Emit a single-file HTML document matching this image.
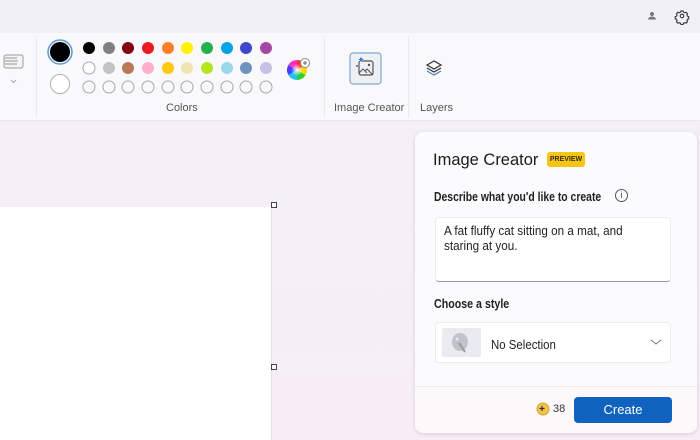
<!DOCTYPE html>
<html><head><meta charset="utf-8"><style>
*{margin:0;padding:0;box-sizing:border-box}
body{width:700px;height:440px;overflow:hidden;position:relative;font-family:"Liberation Sans",sans-serif;background:linear-gradient(180deg,#f2f1f6 0%,#f3f0f6 50%,#f7eef4 100%)}
.a{position:absolute}
.t{color:#1b1b1b;white-space:nowrap}
.sx{transform-origin:0 0}
</style></head><body>
<div class="a" style="left:0;top:0;width:700px;height:33px;background:#f1f1f5"></div>
<div class="a" style="left:0;top:33px;width:700px;height:88px;background:#f9f9fb;border-bottom:1px solid #e8e8ec"></div>
<div class="a" style="left:36px;top:36px;width:1px;height:82px;background:#ebebef"></div>
<div class="a" style="left:324px;top:36px;width:1px;height:82px;background:#ebebef"></div>
<div class="a" style="left:408px;top:36px;width:1px;height:82px;background:#ebebef"></div>
<svg class="a" style="left:0;top:0" width="700" height="120">
<rect x="4" y="55" width="19" height="13" rx="2" fill="#f4f4f6" stroke="#9a9a9a"/>
<path d="M5 58h12M5 61h13M5 64h12" stroke="#b5b5b5" stroke-width="1.5"/>
<path d="M11 80l2.5 2.5 2.5-2.5" fill="none" stroke="#aaa"/>
<circle cx="60" cy="52" r="12" fill="none" stroke="#5b9bd5" stroke-width="1.5"/>
<circle cx="60" cy="52" r="10" fill="#000"/>
<circle cx="60" cy="84" r="9.5" fill="#fff" stroke="#b0b0b0"/>
<g stroke="#a8a8a8" stroke-width="1">
<circle cx="89" cy="48" r="6" fill="#000" stroke="none"/><circle cx="109" cy="48" r="6" fill="#7f7f7f" stroke="none"/><circle cx="128" cy="48" r="6" fill="#880015" stroke="none"/><circle cx="148" cy="48" r="6" fill="#ed1c24" stroke="none"/><circle cx="168" cy="48" r="6" fill="#ff7f27" stroke="none"/><circle cx="187" cy="48" r="6" fill="#fff200" stroke="none"/><circle cx="207" cy="48" r="6" fill="#22b14c" stroke="none"/><circle cx="227" cy="48" r="6" fill="#00a2e8" stroke="none"/><circle cx="246" cy="48" r="6" fill="#3f48cc" stroke="none"/><circle cx="266" cy="48" r="6" fill="#a349a4" stroke="none"/>
<circle cx="89" cy="68" r="6" fill="#fff"/><circle cx="109" cy="68" r="6" fill="#c3c3c3" stroke="none"/><circle cx="128" cy="68" r="6" fill="#b97a57" stroke="none"/><circle cx="148" cy="68" r="6" fill="#ffaec9" stroke="none"/><circle cx="168" cy="68" r="6" fill="#ffc90e" stroke="none"/><circle cx="187" cy="68" r="6" fill="#efe4b0" stroke="none"/><circle cx="207" cy="68" r="6" fill="#b5e61d" stroke="none"/><circle cx="227" cy="68" r="6" fill="#99d9ea" stroke="none"/><circle cx="246" cy="68" r="6" fill="#7092be" stroke="none"/><circle cx="266" cy="68" r="6" fill="#c8bfe7" stroke="none"/>
<g fill="none"><circle cx="89" cy="87" r="6"/><circle cx="109" cy="87" r="6"/><circle cx="128" cy="87" r="6"/><circle cx="148" cy="87" r="6"/><circle cx="168" cy="87" r="6"/><circle cx="187" cy="87" r="6"/><circle cx="207" cy="87" r="6"/><circle cx="227" cy="87" r="6"/><circle cx="246" cy="87" r="6"/><circle cx="266" cy="87" r="6"/></g>
</g>
<defs><radialGradient id="wg"><stop offset="0" stop-color="#fff"/><stop offset="1" stop-color="#fff" stop-opacity="0"/></radialGradient></defs>
<g transform="translate(297,70)">
<path d="M0 0L0 -10A10 10 0 0 1 8.66 -5Z" fill="#ff3030"/><path d="M0 0L8.66 -5A10 10 0 0 1 8.66 5Z" fill="#ffd700"/><path d="M0 0L8.66 5A10 10 0 0 1 0 10Z" fill="#30d030"/><path d="M0 0L0 10A10 10 0 0 1 -8.66 5Z" fill="#20c0f0"/><path d="M0 0L-8.66 5A10 10 0 0 1 -8.66 -5Z" fill="#4040ff"/><path d="M0 0L-8.66 -5A10 10 0 0 1 0 -10Z" fill="#ff30c0"/>
<circle r="6" fill="url(#wg)"/></g>
<circle cx="305" cy="63" r="4.5" fill="#fff" stroke="#888"/><path d="M303 63h4M305 61v4" stroke="#666"/>
<rect x="350" y="53" width="31" height="31" rx="3" fill="#eef0f4" stroke="#7ea6d4" stroke-width="1.2"/>
<rect x="359" y="61" width="14" height="14" rx="2" fill="none" stroke="#555" stroke-width="1.2"/>
<path d="M359 73l4-4 4 4M365 71l2-2 6 6" fill="none" stroke="#555" stroke-width="1.1"/><circle cx="369" cy="65" r="1.2" fill="#555"/>
<path d="M361 56l1 2.5 2.5 1-2.5 1-1 2.5-1-2.5-2.5-1 2.5-1z" fill="#1a73d0" stroke="#f0f0f4" stroke-width=".5"/>
<circle cx="357" cy="66" r="1" fill="#1a73d0"/>
<path d="M434 61l-7 4 7 4 7-4z" fill="none" stroke="#333" stroke-width="1.2"/>
<path d="M427 68l7 4 7-4" fill="none" stroke="#333" stroke-width="1.2"/>
<path d="M427 71l7 4 7-4" fill="none" stroke="#4a7fc0" stroke-width="1.2"/>
<circle cx="652" cy="14" r="2" fill="#777"/><path d="M648 19.5a4 3 0 0 1 8 0z" fill="#777"/>
<g transform="translate(682,16) scale(0.72)" fill="none" stroke="#333" stroke-width="1.5"><circle r="2.5"/><path d="M-1.5 -7h3l.6 1.8 1.8.8 1.7-.9 2.1 2.1-.9 1.7.8 1.8 1.8.6v3l-1.8.6-.8 1.8.9 1.7-2.1 2.1-1.7-.9-1.8.8-.6 1.8h-3l-.6-1.8-1.8-.8-1.7.9-2.1-2.1.9-1.7-.8-1.8-1.8-.6v-3l1.8-.6.8-1.8-.9-1.7 2.1-2.1 1.7.9 1.8-.8z"/></g>
</svg>
<div class="a t" style="left:166px;top:102px;font-size:11px;color:#555">Colors</div>
<div class="a t" style="left:334px;top:102px;font-size:11px;color:#555">Image Creator</div>
<div class="a t" style="left:420px;top:102px;font-size:11px;color:#555">Layers</div>
<div class="a" style="left:0;top:207px;width:272px;height:233px;background:#fff;border-right:1px solid #e4e4e8"></div>
<div class="a" style="left:271px;top:202px;width:6px;height:6px;border:1.3px solid #444;background:#fff"></div>
<div class="a" style="left:271px;top:364px;width:6px;height:6px;border:1.3px solid #444;background:#fff"></div>
<div class="a" style="left:415px;top:132px;width:282px;height:301px;background:#fbfafc;border-radius:8px;box-shadow:0 1px 4px rgba(0,0,0,.14);overflow:hidden">
<div class="a" style="left:0;top:254px;width:282px;height:47px;background:#fdf9fb;border-top:1px solid #ebe8ec"></div>
</div>
<div class="a t sx" style="left:433px;top:150px;font-size:17px;transform:scaleX(0.97)">Image Creator</div>
<div class="a" style="left:547px;top:152px;width:38px;height:15px;background:#f5c518;border-radius:3px;font-size:7px;font-weight:bold;color:#3a2c00;text-align:center;line-height:15px">PREVIEW</div>
<div class="a t sx" style="left:434px;top:189px;font-size:13px;font-weight:bold;color:#222;transform:scaleX(0.8)">Describe what you'd like to create</div>
<div class="a" style="left:615px;top:189px;width:13px;height:13px;border:1px solid #555;border-radius:50%;font-size:9px;text-align:center;line-height:11px;color:#444">i</div>
<div class="a" style="left:435px;top:217px;width:236px;height:65px;background:#fff;border:1px solid #ececec;border-bottom:1.5px solid #999;border-radius:4px"></div>
<div class="a t sx" style="left:444px;top:223px;font-size:13px;line-height:15px;color:#222;transform:scaleX(0.9)">A fat fluffy cat sitting on a mat, and<br>staring at you.</div>
<div class="a t sx" style="left:434px;top:296px;font-size:13px;font-weight:bold;color:#222;transform:scaleX(0.82)">Choose a style</div>
<div class="a" style="left:435px;top:322px;width:236px;height:41px;background:#fff;border:1px solid #ececec;border-radius:4px"></div>
<div class="a" style="left:442px;top:328px;width:39px;height:29px;background:#e9ebf0;border-radius:2px"></div>
<svg class="a" style="left:449px;top:331px" width="22" height="23"><ellipse cx="11" cy="11" rx="8" ry="9" fill="#bfc4cc"/><path d="M10 12l6 9" stroke="#999" stroke-width="2"/><circle cx="8" cy="8" r="1.5" fill="#e6e8ec"/></svg>
<div class="a t sx" style="left:491px;top:337px;font-size:13px;color:#222;transform:scaleX(0.88)">No Selection</div>
<svg class="a" style="left:650px;top:338px" width="12" height="8"><path d="M1 2l5 4 5-4" fill="none" stroke="#777"/></svg>
<svg class="a" style="left:536px;top:402px" width="14" height="14"><circle cx="7" cy="7" r="6" fill="#f2c14e" stroke="#d9a431"/><path d="M6 4v5M3.5 6.5h5" stroke="#333" stroke-width="1.2"/></svg>
<div class="a t" style="left:553px;top:403px;font-size:11px;color:#333">38</div>
<div class="a" style="left:574px;top:397px;width:98px;height:26px;background:#0f62be;border-radius:4px;color:#fff;font-size:13px;text-align:center;line-height:26px">Create</div>
</body></html>
